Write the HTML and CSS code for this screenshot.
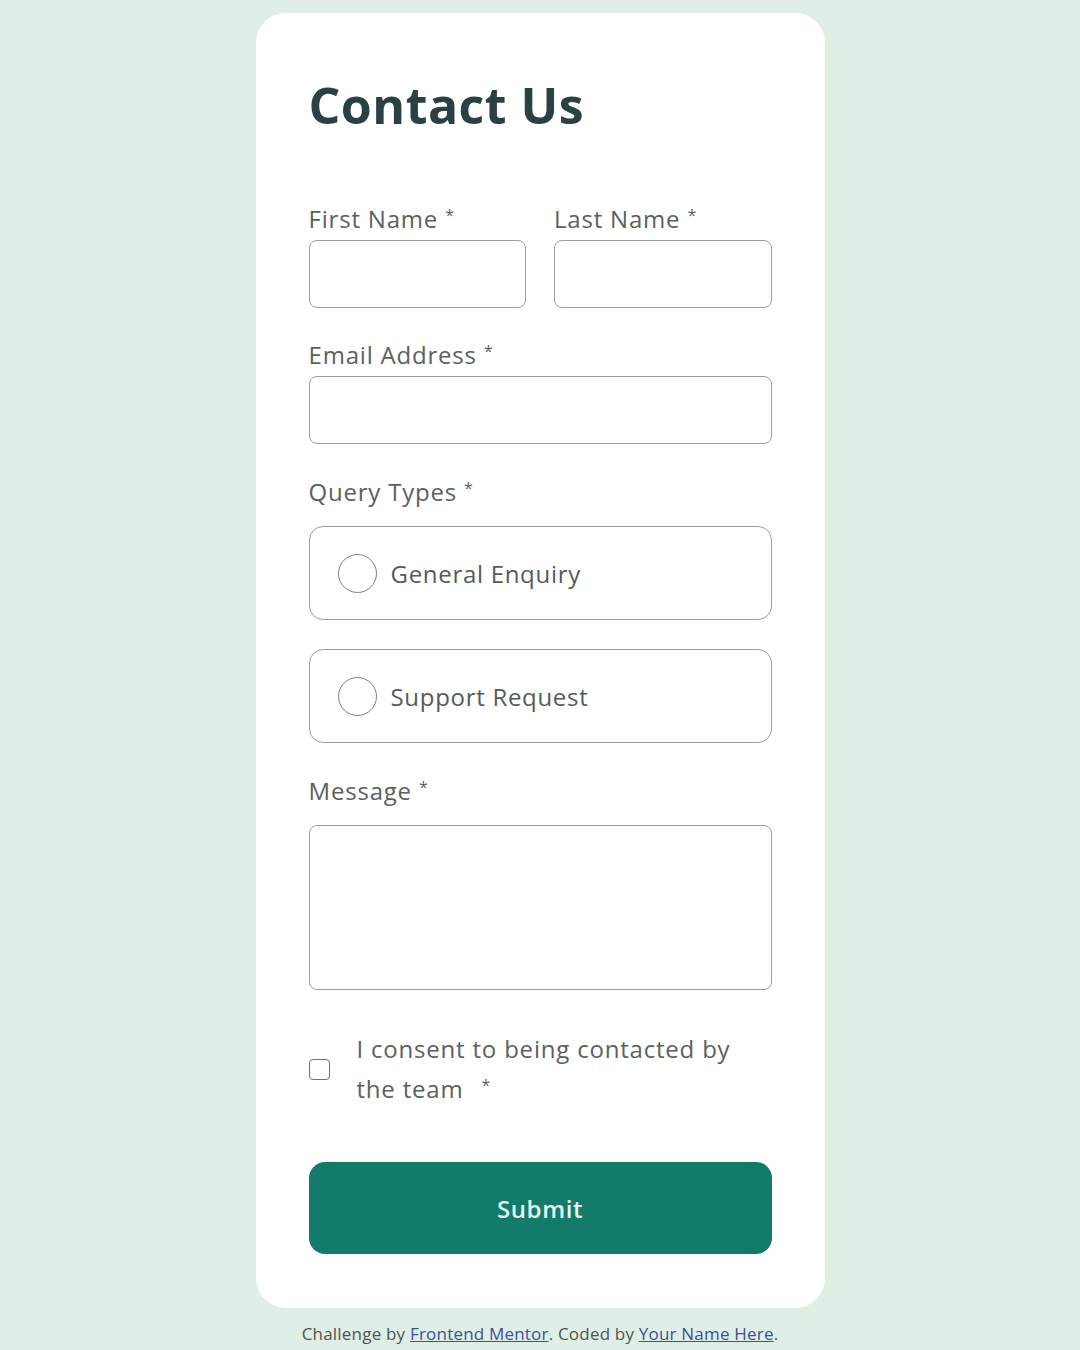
FILE: index.html
```html
<!DOCTYPE html>
<html lang="en">
<head>
<meta charset="utf-8">
<title>Contact Us</title>
<link rel="stylesheet" href="styles.css">
</head>
<body>
<main class="card">
  <h1 class="title">Contact Us</h1>
  <form class="form">
    <div class="row">
      <div class="field">
        <label class="label">First Name <span class="req">*</span></label>
        <div class="input"></div>
      </div>
      <div class="field">
        <label class="label">Last Name <span class="req">*</span></label>
        <div class="input"></div>
      </div>
    </div>
    <div class="field field-email">
      <label class="label">Email Address <span class="req">*</span></label>
      <div class="input"></div>
    </div>
    <div class="group">
      <div class="label">Query Types <span class="req">*</span></div>
      <div class="radios">
        <div class="radio"><span class="circle"></span><span class="radio-text">General Enquiry</span></div>
        <div class="radio"><span class="circle"></span><span class="radio-text">Support Request</span></div>
      </div>
    </div>
    <div class="group">
      <div class="label">Message <span class="req">*</span></div>
      <div class="textarea"></div>
    </div>
    <div class="consent">
      <span class="checkbox"></span>
      <span class="consent-text">I consent to being contacted by the team<span class="req req-gap">*</span></span>
    </div>
    <button type="button" class="submit">Submit</button>
  </form>
</main>
<footer class="attribution">
  Challenge by <a href="#">Frontend Mentor</a>. Coded by <a href="#">Your Name Here</a>.
</footer>
</body>
</html>
```

FILE: styles.css
```css
* { box-sizing: border-box; }
html, body { margin: 0; padding: 0; }
body {
  background: #dfefe5;
  font-family: "Open Sans", "Liberation Sans", sans-serif;
  color: #5b6160;
  padding-top: 13px;
}
.card {
  width: 569px;
  margin: 0 auto;
  background: #ffffff;
  border-radius: 30px;
  padding: 64px 53px 54px;
}
.title {
  margin: 0;
  font-size: 50px;
  line-height: 56px;
  font-weight: 700;
  color: #2a4143;
  letter-spacing: 0.5px;
}
.form { display: flex; flex-direction: column; margin-top: 72px; }
.row { display: flex; gap: 28px; }
.row .field { flex: 1; }
.field { display: flex; flex-direction: column; gap: 7px; }
.field-email { margin-top: 33px; }
.label {
  display: block;
  font-size: 24px;
  line-height: 28px;
  letter-spacing: 0.8px;
  color: #5b6160;
}
.req { font-size: 16px; line-height: 0; vertical-align: 7px; }
.req-gap { margin-left: 18px; }
.input {
  height: 68px;
  border: 1.5px solid #9a9d9c;
  border-radius: 8px;
}
.group { display: flex; flex-direction: column; gap: 20px; margin-top: 34px; }
.radios { display: flex; flex-direction: column; gap: 29px; }
.radio {
  height: 94px;
  border: 1.5px solid #9a9d9c;
  border-radius: 14px;
  display: flex;
  align-items: center;
  padding-left: 28px;
  gap: 14px;
}
.circle {
  width: 39px; height: 39px;
  border: 1.5px solid #7d8180;
  border-radius: 50%;
  flex: none;
}
.radio-text { font-size: 24px; letter-spacing: 0.7px; color: #555b5a; }
.textarea {
  height: 165px;
  border: 1.5px solid #9a9d9c;
  border-radius: 8px;
}
.consent {
  display: flex;
  align-items: center;
  margin-top: 39px;
  gap: 27px;
}
.checkbox {
  width: 21px; height: 21px;
  border: 1.5px solid #6f7372;
  border-radius: 4px;
  flex: none;
}
.consent-text {
  font-size: 24px;
  line-height: 40px;
  letter-spacing: 0.8px;
  color: #5b6160;
  max-width: 400px;
}
.submit {
  margin-top: 53px;
  height: 92px;
  border: none;
  border-radius: 16px;
  background: #137b69;
  color: #e3f7ef;
  font-family: inherit;
  font-size: 24px;
  font-weight: 600;
  letter-spacing: 0.6px;
}
.attribution {
  text-align: center;
  font-size: 17px;
  line-height: 20px;
  letter-spacing: 0.2px;
  color: #4f5453;
  margin-top: 16px;
}
.attribution a { color: #3d4f9a; }
```
